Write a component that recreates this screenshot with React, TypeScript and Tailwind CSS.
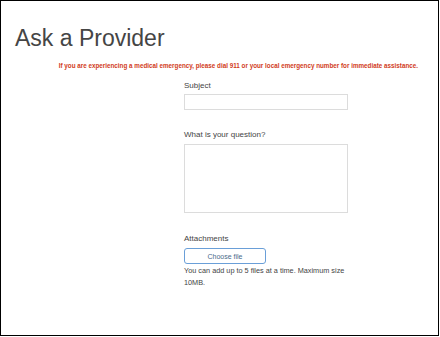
import React from "react";

export default function App() {
  return (
    <div className="w-[440px] h-[337px] bg-white font-['Liberation_Sans',Arial,sans-serif]">
      <div className="w-[439px] h-[336px] border border-black flex flex-col">
        <h1 className="ml-[14px] mt-[26px] text-[23px] leading-none text-[#454545]">Ask a Provider</h1>
        <p className="mt-[12px] pr-[20px] text-right text-[6.3px] leading-[8px] font-bold text-[#d13b1b]">
          If you are experiencing a medical emergency, please dial 911 or your local emergency number for immediate assistance.
        </p>
        <div className="ml-[183px] w-[164px] flex flex-col">
          <label className="mt-[11px] text-[8px] leading-[10px] text-[#444]">Subject</label>
          <input className="mt-[3px] h-[16px] border border-[#dcdcdc] bg-white outline-none" />
          <label className="mt-[20px] text-[8px] leading-[10px] text-[#444]">What is your question?</label>
          <textarea className="mt-[4px] h-[69px] border border-[#dcdcdc] bg-white outline-none resize-none" />
          <label className="mt-[21px] text-[8px] leading-[10px] text-[#444]">Attachments</label>
          <button className="mt-[4px] w-[82px] h-[16px] rounded-[3px] border border-[#6a9fd8] bg-white text-[7px] leading-none text-[#4a6a8a]">
            Choose file
          </button>
          <p className="mt-[1px] w-[170px] text-[7.3px] leading-[12px] text-[#444]">
            You can add up to 5 files at a time. Maximum size 10MB.
          </p>
        </div>
      </div>
    </div>
  );
}
